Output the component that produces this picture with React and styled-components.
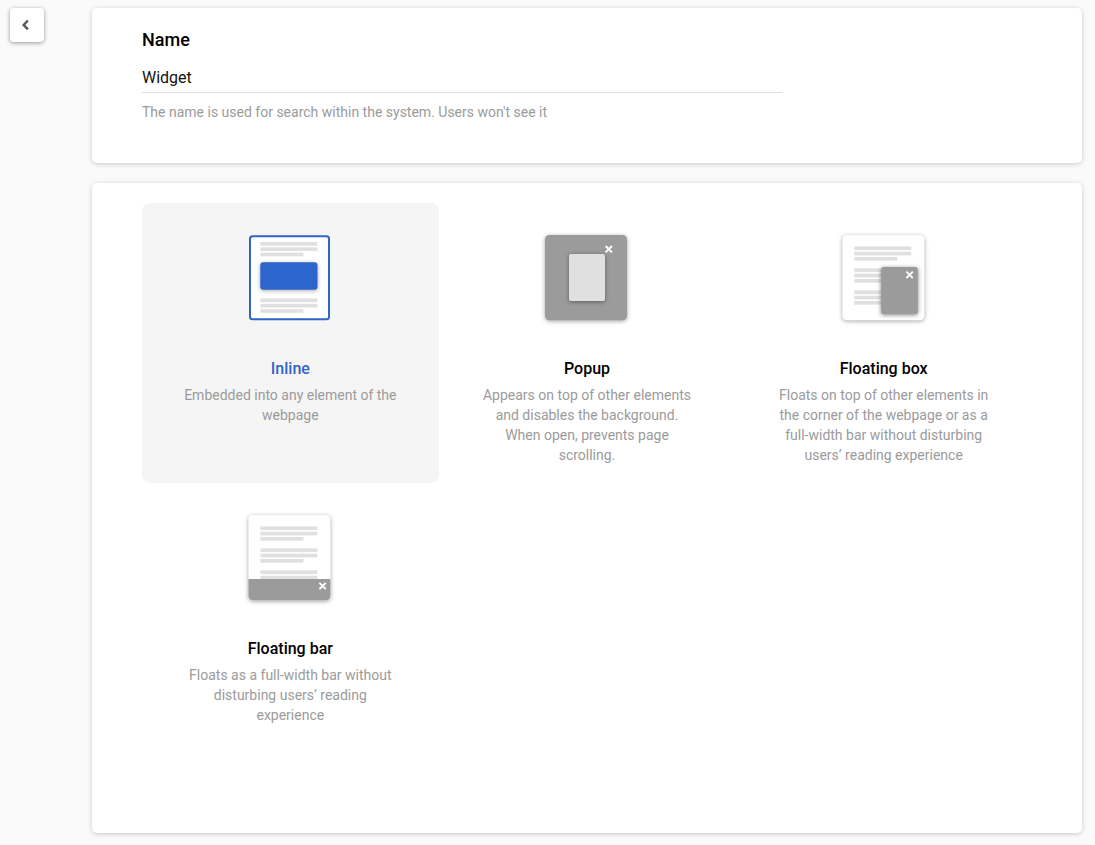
import React, { useState } from "react";
import styled, { createGlobalStyle } from "styled-components";

const GlobalStyle = createGlobalStyle`
  *, *::before, *::after { box-sizing: border-box; }
  body {
    margin: 0;
    background: #fafafa;
    color: #000;
    font-family: Roboto, "Liberation Sans", sans-serif;
    font-size: 14px;
    line-height: 20px;
  }
`;

const Page = styled.div`
  display: flex;
  align-items: flex-start;
  justify-content: space-between;
  gap: 48px;
  min-height: 100vh;
  padding: 8px 13px 12px 10px;
`;

const BackButton = styled.button`
  display: flex;
  flex: none;
  align-items: center;
  justify-content: center;
  width: 34px;
  height: 34px;
  padding: 0;
  border: 0;
  border-radius: 4px;
  background: #fff;
  box-shadow: 0 1px 4px rgba(0, 0, 0, 0.4);
  cursor: pointer;
`;

const Main = styled.main`
  display: flex;
  flex: 1;
  flex-direction: column;
  gap: 20px;
  min-width: 0;
`;

const Card = styled.section`
  padding: ${(p) => p.$padding};
  border-radius: 5px;
  background: #fff;
  box-shadow: 0 1px 5px rgba(0, 0, 0, 0.2);
`;

const NameLabel = styled.label`
  display: block;
  font-size: 18px;
  font-weight: 500;
  line-height: 24px;
`;

const NameInput = styled.input`
  display: block;
  width: 100%;
  max-width: 640px;
  height: 31px;
  margin-top: 10px;
  padding: 0;
  border: 0;
  border-bottom: 1px solid #e0e0e0;
  background: transparent;
  color: #111;
  font: 400 16px/24px Roboto, "Liberation Sans", sans-serif;
  outline: none;
`;

const Hint = styled.p`
  margin: 9px 0 0;
  color: #9b9b9b;
`;

const OptionGrid = styled.div`
  display: grid;
  grid-template-columns: repeat(3, 1fr);
  grid-auto-rows: minmax(280px, auto);
`;

const HiddenRadio = styled.input`
  position: absolute;
  opacity: 0;
  width: 1px;
  height: 1px;
  margin: 0;
`;

const Option = styled.label`
  position: relative;
  display: flex;
  flex-direction: column;
  align-items: center;
  padding: 22px 40px 0;
  border-radius: 8px;
  background: ${(p) => (p.$selected ? "#f5f5f5" : "transparent")};
  text-align: center;
  cursor: pointer;
`;

const OptionTitle = styled.span`
  margin-top: 24px;
  color: ${(p) => (p.$selected ? "#3064c8" : "#000")};
  font-size: 16px;
  font-weight: 500;
  line-height: 20px;
`;

const OptionText = styled.span`
  margin-top: 6px;
  color: #9b9b9b;
`;

const Illustration = styled.svg`
  display: block;
  flex: none;
  overflow: visible;
`;

const Lifted = styled.g`
  filter: drop-shadow(0 1px 2px rgba(0, 0, 0, ${(p) => p.$strength}));
`;

function Lines({ x, y, count = 3 }) {
  return [57, 57, 43].slice(0, count).map((width, i) => (
    <rect key={i} x={x} y={y + i * 5.3} width={width} height="3.7" fill="#e0e0e0" />
  ));
}

function Cross({ x, y }) {
  return (
    <path
      d={`M${x - 3.2} ${y - 3.2}l6.4 6.4m0-6.4l-6.4 6.4`}
      stroke="#fff"
      strokeWidth="1.9"
      fill="none"
    />
  );
}

function Sheet({ x = 14, fill = "#fff", children }) {
  return (
    <Lifted $strength={0.36}>
      <rect x={x} y="10" width="82" height="85.3" rx="4.5" fill={fill} />
      {children}
    </Lifted>
  );
}

function InlineArt() {
  return (
    <>
      <rect x="15" y="11.3" width="79" height="83" rx="2.5" fill="#fff" stroke="#3064c8" strokeWidth="2" />
      <Lines x={25.4} y={17} />
      <Lines x={25.4} y={73.5} />
      <Lifted $strength={0.35}>
        <rect x="25.3" y="37.2" width="57.2" height="27.5" rx="3" fill="#2c65cc" />
      </Lifted>
    </>
  );
}

function PopupArt() {
  return (
    <>
      <Sheet fill="#9b9b9b" />
      <Lifted $strength={0.4}>
        <rect x="38" y="29" width="36" height="47" rx="2" fill="#e0e0e0" />
      </Lifted>
      <Cross x={77.8} y={24.2} />
    </>
  );
}

function FloatingBoxArt() {
  return (
    <>
      <Sheet x={14.4} />
      <Lines x={26.3} y={21.4} />
      <Lines x={26.3} y={43.4} />
      <Lines x={26.3} y={65.4} />
      <Lifted $strength={0.5}>
        <rect x="53.2" y="42" width="36.6" height="47" rx="2.5" fill="#9b9b9b" />
      </Lifted>
      <Cross x={81.6} y={49.9} />
    </>
  );
}

function FloatingBarArt() {
  return (
    <>
      <Sheet x={13.4}>
        <path
          d="M13.9 74h81a.5 .5 0 0 1 .5 .5v16.3a4.5 4.5 0 0 1-4.5 4.5h-73a4.5 4.5 0 0 1-4.5-4.5v-16.3a.5 .5 0 0 1 .5-.5z"
          fill="#9b9b9b"
        />
      </Sheet>
      <Lines x={25.4} y={21.4} />
      <Lines x={25.4} y={43.4} />
      <Lines x={25.4} y={65.4} count={1} />
      <rect x="25.4" y="70.7" width="57" height="3.3" fill="#e0e0e0" />
      <Cross x={87.6} y={81} />
    </>
  );
}

const OPTIONS = [
  {
    id: "inline",
    title: "Inline",
    text: "Embedded into any element of the webpage",
    Art: InlineArt,
  },
  {
    id: "popup",
    title: "Popup",
    text: "Appears on top of other elements and disables the background. When open, prevents page scrolling.",
    Art: PopupArt,
  },
  {
    id: "floating-box",
    title: "Floating box",
    text: "Floats on top of other elements in the corner of the webpage or as a full-width bar without disturbing users’ reading experience",
    Art: FloatingBoxArt,
  },
  {
    id: "floating-bar",
    title: "Floating bar",
    text: "Floats as a full-width bar without disturbing users’ reading experience",
    Art: FloatingBarArt,
  },
];

export default function App() {
  const [name, setName] = useState("Widget");
  const [selected, setSelected] = useState("inline");

  return (
    <>
      <GlobalStyle />
      <Page>
        <BackButton type="button" aria-label="Back">
          <svg width="12" height="14" viewBox="0 0 12 14" aria-hidden="true">
            <path d="M6.9 2.5L2.7 6.9l4.2 4.4" fill="none" stroke="#5c5c5c" strokeWidth="2.5" />
          </svg>
        </BackButton>
        <Main>
          <Card $padding="20px 50px 41px">
            <NameLabel htmlFor="widget-name">Name</NameLabel>
            <NameInput
              id="widget-name"
              value={name}
              onChange={(e) => setName(e.target.value)}
              aria-describedby="widget-name-hint"
            />
            <Hint id="widget-name-hint">
              The name is used for search within the system. Users won't see it
            </Hint>
          </Card>
          <Card $padding="20px 50px 70px">
            <OptionGrid role="radiogroup" aria-label="Widget type">
              {OPTIONS.map(({ id, title, text, Art }) => (
                <Option key={id} $selected={selected === id}>
                  <HiddenRadio
                    type="radio"
                    name="widget-type"
                    value={id}
                    checked={selected === id}
                    onChange={() => setSelected(id)}
                  />
                  <Illustration width="111" height="110" viewBox="0 0 111 110" aria-hidden="true">
                    <Art />
                  </Illustration>
                  <OptionTitle $selected={selected === id}>{title}</OptionTitle>
                  <OptionText>{text}</OptionText>
                </Option>
              ))}
            </OptionGrid>
          </Card>
        </Main>
      </Page>
    </>
  );
}
